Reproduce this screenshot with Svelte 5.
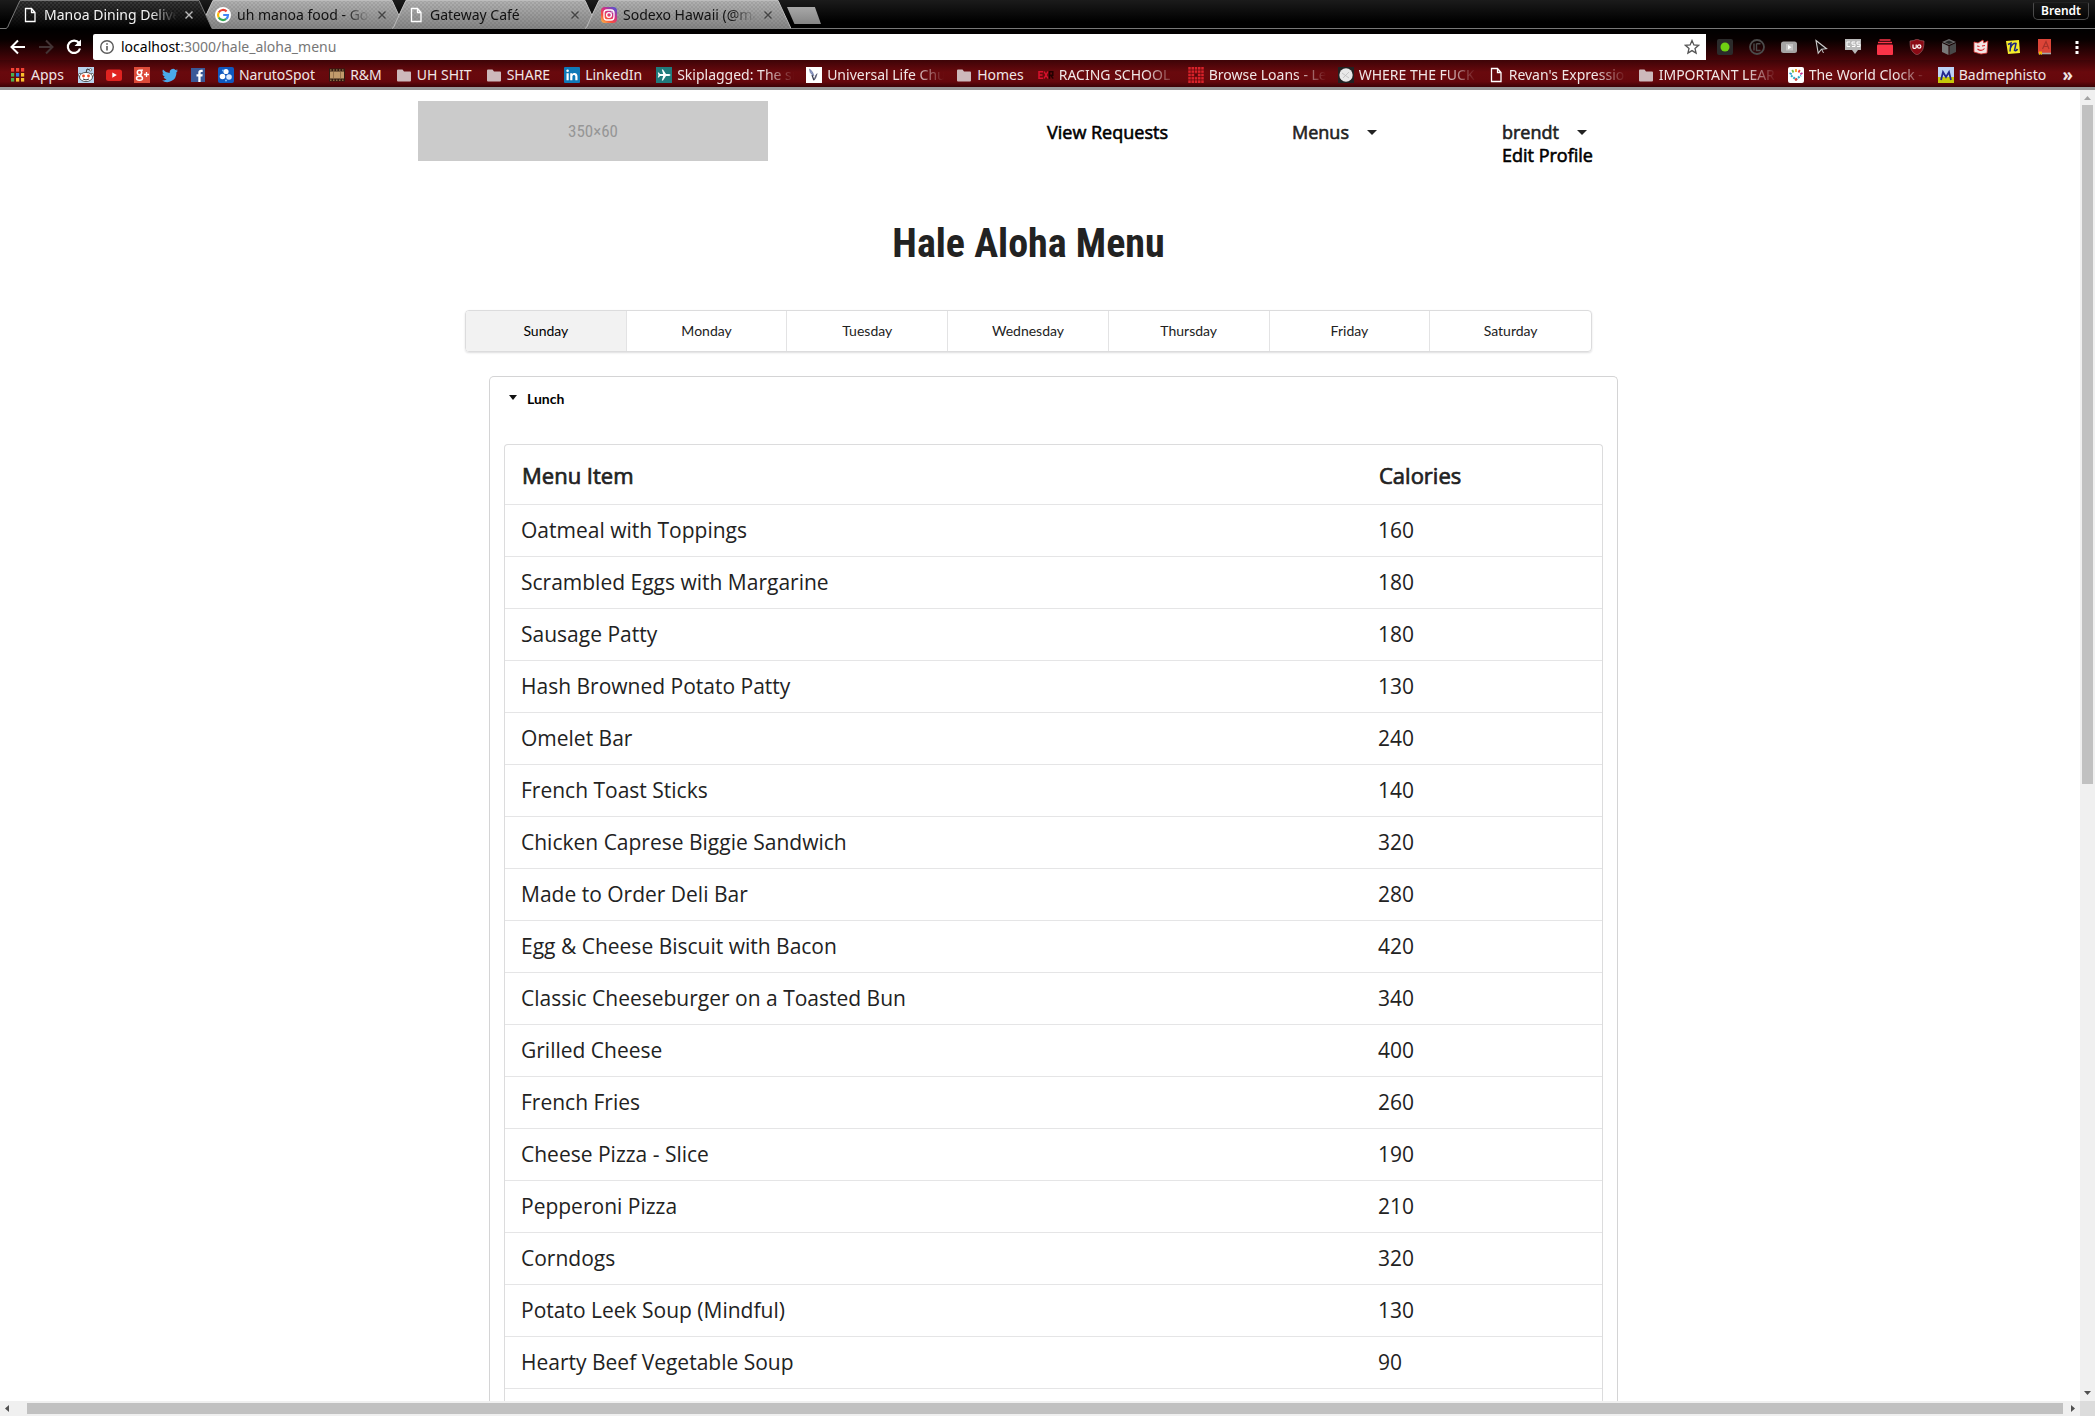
<script lang="ts">
  const tabs = [
    { icon: 'page', label: 'Manoa Dining Delivery', active: true },
    { icon: 'google', label: 'uh manoa food - Google', active: false },
    { icon: 'page', label: 'Gateway Café', active: false },
    { icon: 'instagram', label: 'Sodexo Hawaii (@manoa)', active: false },
  ];

  const bookmarks = [
    { icon: 'apps', label: 'Apps', title: 'Apps' },
    { icon: 'reddit', label: '', title: 'Reddit' },
    { icon: 'youtube', label: '', title: 'YouTube' },
    { icon: 'gplus', label: '', title: 'Google+' },
    { icon: 'twitter', label: '', title: 'Twitter' },
    { icon: 'facebook', label: '', title: 'Facebook' },
    { icon: 'naruto', label: 'NarutoSpot', title: 'NarutoSpot' },
    { icon: 'film', label: 'R&M', title: 'R&M' },
    { icon: 'folder', label: 'UH SHIT', title: 'UH SHIT' },
    { icon: 'folder', label: 'SHARE', title: 'SHARE' },
    { icon: 'linkedin', label: 'LinkedIn', title: 'LinkedIn' },
    { icon: 'plane', label: 'Skiplagged: The smart', title: 'Skiplagged', long: true },
    { icon: 'feather', label: 'Universal Life Church', title: 'Universal Life', long: true },
    { icon: 'folder', label: 'Homes', title: 'Homes' },
    { icon: 'exr', label: 'RACING SCHOOL', title: 'Racing school', long: true },
    { icon: 'loans', label: 'Browse Loans - Lend', title: 'Browse Loans', long: true },
    { icon: 'where', label: 'WHERE THE FUCK', title: 'Where', long: true },
    { icon: 'page', label: "Revan's Expression", title: "Revan's", long: true },
    { icon: 'folder', label: 'IMPORTANT LEARN', title: 'Important', long: true },
    { icon: 'clock', label: 'The World Clock - W', title: 'The World Clock', long: true },
    { icon: 'bad', label: 'Badmephisto', title: 'Badmephisto' },
  ];

  const extensions = ['record', 'pause', 'video', 'cursor', 'css', 'stack', 'shield', 'cube', 'mask', 'note', 'dict'];
  const days = ['Sunday', 'Monday', 'Tuesday', 'Wednesday', 'Thursday', 'Friday', 'Saturday'];

  const items: [string, number][] = [
    ['Oatmeal with Toppings', 160],
    ['Scrambled Eggs with Margarine', 180],
    ['Sausage Patty', 180],
    ['Hash Browned Potato Patty', 130],
    ['Omelet Bar', 240],
    ['French Toast Sticks', 140],
    ['Chicken Caprese Biggie Sandwich', 320],
    ['Made to Order Deli Bar', 280],
    ['Egg & Cheese Biscuit with Bacon', 420],
    ['Classic Cheeseburger on a Toasted Bun', 340],
    ['Grilled Cheese', 400],
    ['French Fries', 260],
    ['Cheese Pizza - Slice', 190],
    ['Pepperoni Pizza', 210],
    ['Corndogs', 320],
    ['Potato Leek Soup (Mindful)', 130],
    ['Hearty Beef Vegetable Soup', 90],
  ];

  let day = $state('Sunday');
</script>

{#snippet icon(name: string)}
  <svg class="icon" viewBox="0 0 16 16" width="16" height="16" aria-hidden="true">
    {#if name === 'page'}
      <path d="M3.500 1.500h6l3.500 4v9h-9.500z M9.500 1.500v4h3.500" fill="none" stroke="#fff" stroke-width="1.300" />
    {:else if name === 'google'}
      <circle cx="8" cy="8" r="8" fill="#fff" />
      <g fill="none" stroke-width="2.200">
        <path d="M11.600 4.400A5 5 0 0 0 3.700 5.500" stroke="#ea4335" />
        <path d="M3.700 5.500a5 5 0 0 0 0 5" stroke="#fbbc05" />
        <path d="M3.700 10.500a5 5 0 0 0 7.500 1.400" stroke="#34a853" />
        <path d="M11.200 11.900A5 5 0 0 0 13 8H8.200" stroke="#4285f4" />
      </g>
    {:else if name === 'instagram'}
      <defs>
        <linearGradient id="insta" x1="0" y1="1" x2="0.800" y2="0">
          <stop offset="0" stop-color="#fec44a" /><stop offset="0.350" stop-color="#f5503f" />
          <stop offset="0.650" stop-color="#d22f86" /><stop offset="1" stop-color="#5a4fcf" />
        </linearGradient>
      </defs>
      <rect width="16" height="16" rx="4" fill="url(#insta)" />
      <rect x="3" y="3" width="10" height="10" rx="3" fill="none" stroke="#fff" stroke-width="1.300" />
      <circle cx="8" cy="8" r="2.400" fill="none" stroke="#fff" stroke-width="1.300" />
      <circle cx="11" cy="5" r=".7" fill="#fff" />
    {:else if name === 'apps'}
      {#each [0, 1, 2] as r}
        {#each [0, 1, 2] as c}
          <rect x={c * 5 + 1} y={r * 5 + 1} width="3.200" height="3.600"
            fill={[['#f44336', '#f44336', '#f44336'], ['#4caf50', '#2f7de1', '#fbc02d'], ['#4caf50', '#fbc02d', '#fbc02d']][r][c]} />
        {/each}
      {/each}
    {:else if name === 'reddit'}
      <rect width="16" height="16" fill="#b9d3ec" />
      <path d="M8 6l1-4 3 .8" stroke="#333" fill="none" />
      <circle cx="12.500" cy="2.800" r="1.200" fill="#fff" stroke="#333" stroke-width=".6" />
      <circle cx="2" cy="8" r="1.700" fill="#fff" stroke="#333" stroke-width=".6" />
      <circle cx="14" cy="8" r="1.700" fill="#fff" stroke="#333" stroke-width=".6" />
      <ellipse cx="8" cy="10" rx="6.500" ry="4.600" fill="#fff" stroke="#333" stroke-width=".8" />
      <circle cx="5.500" cy="9" r="1.400" fill="#f04a24" /><circle cx="10.500" cy="9" r="1.400" fill="#f04a24" />
      <path d="M5 12q3 1.800 6 0" stroke="#333" fill="none" />
    {:else if name === 'youtube'}
      <rect y="2.500" width="16" height="11.500" rx="2.500" fill="#e02320" />
      <path d="M6.300 5.500v5.300l4.500-2.700z" fill="#fff" />
    {:else if name === 'gplus'}
      <rect width="16" height="16" fill="#dd4b39" />
      <circle cx="5.500" cy="5.500" r="2.200" fill="none" stroke="#fff" stroke-width="1.500" />
      <ellipse cx="5.500" cy="11.200" rx="3" ry="2" fill="none" stroke="#fff" stroke-width="1.500" />
      <path d="M6.500 3.200h2.500 M6 7.800l1.500 1.500 M10 7.500h5 M12.500 5v5" stroke="#fff" stroke-width="1.300" fill="none" />
    {:else if name === 'twitter'}
      <path d="M16 3.500c-.6.300-1.200.4-1.900.5.700-.4 1.200-1 1.400-1.800-.6.400-1.300.6-2 .8A3.300 3.300 0 0 0 7.800 6C5 5.900 2.600 4.600 1 2.600c-.9 1.500-.4 3.400 1 4.400-.5 0-1-.2-1.500-.4 0 1.600 1.100 2.900 2.600 3.200-.5.100-1 .2-1.500.1.400 1.300 1.600 2.200 3.100 2.300A6.600 6.600 0 0 1 0 13.500 9.300 9.300 0 0 0 14.400 5.200c.6-.5 1.200-1 1.600-1.700z" fill="#4aa9ea" />
    {:else if name === 'facebook'}
      <rect x="1" y="1" width="14" height="14" fill="#3b5998" />
      <path d="M8.300 15V9.500H6.500V7.300h1.800V5.600c0-1.900 1.200-2.800 2.800-2.800h1.600v2.100h-1.100c-.8 0-1 .4-1 1v1.400h2.100l-.3 2.200h-1.800V15z" fill="#fff" />
    {:else if name === 'naruto'}
      <rect width="16" height="16" rx="2" fill="#1059c0" />
      <circle cx="8" cy="4.500" r="2.600" fill="#fff" /><circle cx="4.500" cy="9.500" r="2.800" fill="#fff" />
      <circle cx="11" cy="10" r="2.800" fill="#dceaff" /><circle cx="5" cy="3.500" r="1" fill="#7fc1ff" /><circle cx="8" cy="13.500" r="1" fill="#7fc1ff" />
    {:else if name === 'film'}
      <rect y="1.500" width="16" height="13" fill="#2f1b12" />
      <rect x="1" y="4.500" width="14" height="7" fill="#c19a6b" />
      <path d="M1 3h14 M1 13.200h14" stroke="#8a6a42" stroke-width="1.400" stroke-dasharray="1.500 1.500" />
      <path d="M4.500 4.500v7M11.500 4.500v7" stroke="#8b6844" stroke-width=".8" />
    {:else if name === 'folder'}
      <path d="M1 3.500q0-1 1-1h4.500l1.500 2h6q1 0 1 1v8q0 1-1 1h-12q-1 0-1-1z" fill="#cdb9bb" />
    {:else if name === 'linkedin'}
      <rect width="16" height="16" rx="1" fill="#0f7ab8" />
      <path d="M2.500 6.200h2.200v7H2.500z M6.200 6.200h2.100v1c1-1.700 5.200-1.800 5.200 2v4h-2.200V9.600c0-2.200-2.900-2-2.900 0v3.600H6.200z" fill="#fff" />
      <circle cx="3.600" cy="3.800" r="1.300" fill="#fff" />
    {:else if name === 'plane'}
      <rect width="16" height="16" fill="#207b7c" />
      <path d="M14.500 8q0-1-2-1H10L7 2.500H5.800L7.200 7H4L2.800 5.500H1.800L2.500 8l-.7 2.500h1L4 9h3.200l-1.400 4.500H7L10 9h2.500q2 0 2-1z" fill="#fff" />
    {:else if name === 'feather'}
      <rect width="16" height="16" fill="#fff" />
      <path d="M3.500 2q3.500 2 4.500 7L6.500 8Q3.500 6 3.500 2z" fill="#8f9cc8" stroke="#5b658f" stroke-width=".5" />
      <path d="M11.500 6Q9 7 7.500 14q3.500-3 4-8z" fill="#5d6076" />
      <path d="M6 8l1.800 5" stroke="#34364a" stroke-width="1.200" />
    {:else if name === 'exr'}
      <g fill="none" stroke-width="1.500">
        <path d="M5 4.800H1v6.400h4M1 8h3.500M6 4.500l4 7M10 4.500l-4 7" stroke="#d8102c" />
        <path d="M11.500 11.700V4.800h3.300v3.400h-3M13 8.500l2.200 3.200" stroke="#200" />
      </g>
    {:else if name === 'loans'}
      <path d="M1.500 0v16M4.750 0v16M8 0v16M11.250 0v16M14.500 0v16" stroke="#d8222a" stroke-width="2.500" />
      <path d="M0 3h16M0 6.300h16M0 9.600h16M0 12.900h16" stroke="#5d070b" stroke-width=".8" />
      <path d="M6.700 6.700h2.800v2.600H6.700z" fill="#5d070b" />
    {:else if name === 'where'}
      <rect width="16" height="16" fill="#222" />
      <circle cx="8" cy="8" r="6.700" fill="#e8e8e8" />
      <path d="M4 6l7 5M11 5l-6 6" stroke="#bbb" stroke-width=".8" />
    {:else if name === 'clock'}
      <rect width="16" height="16" rx="2" fill="#fff" />
      <path d="M8 2v3" stroke="#f8a51b" stroke-width="1.800" /><path d="M4.200 3l1.300 2.500" stroke="#7ac143" stroke-width="1.800" />
      <path d="M11.800 3l-1.300 2.500" stroke="#ef4136" stroke-width="1.800" /><path d="M1.500 6l2.200 1.300" stroke="#2a9fd8" stroke-width="1.800" />
      <path d="M14.500 6l-2.200 1.300" stroke="#c0308f" stroke-width="1.800" />
      <path d="M3 8.500l5 4 5-4" stroke="#2aa9c9" stroke-width="2" stroke-dasharray="2 1" fill="none" />
      <circle cx="8" cy="12.500" r="1.300" fill="#ef4136" />
    {:else if name === 'bad'}
      <rect width="16" height="16" fill="#bcd3f5" /><rect y="10" width="16" height="6" fill="#c5c80a" />
      <path d="M3 13l2-8 3 5 3-5 2 8" stroke="#22278d" stroke-width="1.800" fill="none" />
    {:else if name === 'record'}
      <rect width="16" height="16" rx="2" fill="#2b2b2b" /><circle cx="8" cy="8" r="4.500" fill="#6fcf12" />
    {:else if name === 'pause'}
      <circle cx="8" cy="8" r="7" fill="none" stroke="#4b4b4b" stroke-width="1.800" />
      <path d="M5 4.500v7M7.500 4.800h4M7.500 4.500v7h4" stroke="#4b4b4b" stroke-width="1.400" fill="none" />
    {:else if name === 'video'}
      <rect y="2.500" width="16" height="11.500" rx="2.500" fill="#a6a4a4" /><rect x="5" y="5" width="7" height="6.500" fill="#c4c2c2" /><path d="M7 6v4.500l3.500-2.200z" fill="#fff" />
    {:else if name === 'cursor'}
      <path d="M3 1.500l10.500 8.200-5 .5-3.300 4z" fill="#16090a" stroke="#ccc" stroke-width="1.100" /><path d="M8.500 10l2 4" stroke="#ccc" />
    {:else if name === 'css'}
      <path d="M0 0h16v11h-3l-3 4-3-4H0z" fill="#b9b9b9" />
      <path d="M5 3H2v4.500h3M10 3H7v2.200h3v2.300H7M15 3h-3v2.200h3v2.300h-3" stroke="#fff" fill="none" />
    {:else if name === 'stack'}
      <rect y="5.500" width="16" height="10.500" rx="1" fill="#fb3448" /><path d="M1 3.500h14M2.500 1h11" stroke="#fb3448" stroke-width="1.600" />
    {:else if name === 'shield'}
      <path d="M8 0q3 2 7 2c0 7-1 11-7 14C2 13 1 9 1 2q4 0 7-2z" fill="#8b0a15" stroke="#9d6468" stroke-width=".6" />
      <path d="M4 5.500v3.200q1.800 1.500 3.200 0V5.500" stroke="#fff" stroke-width="1.200" fill="none" /><circle cx="10.200" cy="7.500" r="1.700" stroke="#fff" stroke-width="1.200" fill="none" />
    {:else if name === 'cube'}
      <path d="M8 0l7 3-7 3-7-3z" fill="#666" /><path d="M1 4l6.500 3v9L1 13z" fill="#787878" /><path d="M15 4L8.500 7v9l6.500-3z" fill="#484848" />
      <path d="M4 3.200l4-1.600 4 1.600-4 1.700z" fill="#252525" />
    {:else if name === 'mask'}
      <path d="M1 3l4 1 5-3 .8 3 4-2-.8 12-6 1-7-2z" fill="#f2e4e4" stroke="#d33" stroke-width=".8" />
      <path d="M4 7l2.500.5M9 7l3-.5M4.500 10q4 3 7-.5" stroke="#d8232a" stroke-width="1.100" fill="none" />
    {:else if name === 'note'}
      <path d="M1 2l13-1 1 13-12 1z" fill="#f6ec2c" />
      <path d="M3 5.500L6 4 5 12.500M5.500 9Q8 3.500 11 4.500L9.500 11.500q1.500 1 3-1.500" stroke="#1c2680" stroke-width="1.500" fill="none" />
    {:else if name === 'dict'}
      <rect x="1" width="13" height="14" fill="#db4437" /><path d="M1.500 14.500h12.500" stroke="#a8a8a8" stroke-width="1.600" />
      <path d="M5.500 10L9 2.500l3 7.500M6.800 7.500h4.300" stroke="#a8322a" stroke-width="1.200" fill="none" /><path d="M2 12.500h3V16l-1.500-1L2 16z" fill="#f4b400" />
    {/if}
  </svg>
{/snippet}

<div class="window">
  <header class="chrome">
    <div class="tabstrip">
      <div class="tabs">
        {#each tabs as tab, i}
          <div class="tab" class:active={tab.active}>
            <svg class="shape" viewBox="0 0 206 29" aria-hidden="true">
              <defs>
                <linearGradient id="fill{i}" x1="0" y1="0" x2="0" y2="1">
                  <stop offset="0" stop-color={tab.active ? '#3c3c3c' : '#b2b2b2'} />
                  <stop offset="1" stop-color={tab.active ? '#000' : '#848484'} />
                </linearGradient>
                <pattern id="weave{i}" width="4" height="4" patternUnits="userSpaceOnUse">
                  <path d="M0 0h2v2H0zM2 2h2v2H2z" fill="#000" opacity={tab.active ? '0.300' : '0.070'} />
                </pattern>
              </defs>
              <path d="M0 29L14 0H193L206 29z" fill="url(#fill{i})" />
              <path d="M0 29L14 0H193L206 29z" fill="url(#weave{i})" />
              <path d="M0 28.500Q2 28 3 24L14 .5H193L206 28.500" fill="none" stroke={tab.active ? '#777' : '#bdbdbd'} />
            </svg>
            {@render icon(tab.icon)}
            <button class="tablabel">{tab.label}</button>
            <button class="close" aria-label="Close {tab.label}">
              <svg viewBox="0 0 8 8" width="8" height="8"><path d="M.5.5l7 7M7.500.5l-7 7" stroke="currentColor" stroke-width="1.400" /></svg>
            </button>
          </div>
        {/each}
        <button class="newtab" aria-label="New tab"></button>
      </div>
      <button class="user">Brendt</button>
    </div>

    <div class="toolbar">
      <button aria-label="Back"><svg viewBox="0 0 16 16" width="16" height="16"><path d="M15 8H2M8 1.500L1.500 8 8 14.500" fill="none" stroke="#fff" stroke-width="2" /></svg></button>
      <button aria-label="Forward"><svg viewBox="0 0 16 16" width="16" height="16"><path d="M1 8h13M8 1.500L14.500 8 8 14.500" fill="none" stroke="#423334" stroke-width="2" /></svg></button>
      <button aria-label="Reload"><svg viewBox="0 0 16 16" width="16" height="16"><path d="M13 4A6.200 6.200 0 1 0 14 9.500" fill="none" stroke="#fff" stroke-width="2.200" /><path d="M15 .5v6.500H8.500z" fill="#fff" /></svg></button>
      <div class="omnibox">
        <svg viewBox="0 0 16 16" width="16" height="16" aria-hidden="true"><circle cx="8" cy="8" r="6.300" fill="none" stroke="#5a5a5a" stroke-width="1.400" /><path d="M8 7v4.500M8 4.200v1.600" stroke="#5a5a5a" stroke-width="1.600" /></svg>
        <a class="url" href="#address"><b>localhost</b>:3000/hale_aloha_menu</a>
        <button aria-label="Bookmark this page"><svg viewBox="0 0 16 16" width="16" height="16"><path d="M8 1.500l1.900 4.400 4.700.4-3.600 3.100 1.100 4.700L8 11.600l-4.100 2.500L5 9.400 1.400 6.300l4.700-.4z" fill="none" stroke="#555" stroke-width="1.300" /></svg></button>
      </div>
      <div class="extensions">
        {#each extensions as ext}
          <button aria-label={ext}>{@render icon(ext)}</button>
        {/each}
        <button aria-label="Menu"><svg viewBox="0 0 16 16" width="16" height="16"><path d="M6.500 2h3v3h-3zM6.500 7h3v3h-3zM6.500 12h3v3h-3z" fill="#fff" /></svg></button>
      </div>
    </div>

    <nav class="bookmarks" aria-label="Bookmarks">
      {#each bookmarks as mark}
        <a href="#bookmark" aria-label={mark.title}>
          {@render icon(mark.icon)}
          {#if mark.label}<span class="label" class:long={mark.long}>{mark.label}</span>{/if}
        </a>
      {/each}
      <button class="more" aria-label="More bookmarks">»</button>
    </nav>
  </header>

  <div class="viewport">
    <div class="page">
      <div class="container">
        <nav class="site" aria-label="Site">
          <div><div class="logo">350×60</div></div>
          <div class="entry"><a href="#requests">View Requests</a></div>
          <div class="entry"><button>Menus<i class="caret"></i></button></div>
          <div class="entry"><button>brendt<i class="caret"></i></button><a href="#profile">Edit Profile</a></div>
        </nav>

        <main>
          <div class="week">
            <h1>Hale Aloha Menu</h1>
            <div class="days" role="tablist">
              {#each days as d}
                <button role="tab" aria-selected={d === day} class:selected={d === day} onclick={() => (day = d)}>{d}</button>
              {/each}
            </div>
          </div>
          <section class="meal">
            <button class="mealtitle"><i class="caret"></i>Lunch</button>
            <div class="tablebox">
              <table>
                <thead><tr><th>Menu Item</th><th class="cal">Calories</th></tr></thead>
                <tbody>
                  {#each items as [name, calories]}
                    <tr><td>{name}</td><td>{calories}</td></tr>
                  {/each}
                </tbody>
              </table>
            </div>
          </section>
        </main>
      </div>
    </div>
    <div class="vbar" aria-hidden="true">
      <svg viewBox="0 0 15 15" width="15" height="15"><path d="M4 10l3.500-4 3.500 4z" fill="#a3a3a3" /></svg>
      <div class="rail"><div class="vthumb"></div></div>
      <svg viewBox="0 0 15 15" width="15" height="15"><path d="M4 5l3.500 4L11 5z" fill="#505050" /></svg>
    </div>
    <div class="hbar" aria-hidden="true">
      <svg viewBox="0 0 15 15" width="15" height="15"><path d="M9 4L5 7.500 9 11z" fill="#505050" /></svg>
      <div class="hthumb"></div>
      <svg viewBox="0 0 15 15" width="15" height="15"><path d="M6 4l4 3.500L6 11z" fill="#505050" /></svg>
    </div>
    <div class="corner"></div>
  </div>
</div>

<style>
  :global(body) { margin: 0; background: #fff; }
  .window { height: 100vh; display: flex; flex-direction: column; overflow: hidden; font-family: "Open Sans", sans-serif; color: #222; }
  button { font: inherit; color: inherit; background: none; border: 0; padding: 0; margin: 0; -webkit-text-stroke: inherit; }
  a { color: inherit; text-decoration: none; }
  svg { display: block; flex: none; }

  .chrome { font-family: "Noto Sans", "Open Sans", sans-serif; font-size: 14px; line-height: 20px; color: #f0e6e6; border-bottom: 3px solid #999; background: #000; flex: none; }
  .tabstrip { display: flex; justify-content: space-between; height: 28px; background: linear-gradient(#1b1b1b, #000 22px); border-bottom: 1px solid #777; }
  .tabs { display: flex; padding-left: 6px; }
  .tab { position: relative; isolation: isolate; box-sizing: border-box; width: 206px; height: 29px; margin-right: -13px; padding: 1px 19px 0 16px; display: flex; align-items: center; color: #111; }
  .tab.active { color: #f2f2f2; z-index: 2; }
  .shape { position: absolute; inset: 0; z-index: -1; width: 206px; height: 29px; }
  .tablabel { flex: 1; margin: 0 8px 0 6px; min-width: 0; text-align: left; white-space: nowrap; overflow: hidden; mask-image: linear-gradient(90deg, #000 80%, transparent); }
  .close { color: #444; display: flex; }
  .active .close { color: #bbb; }
  .newtab { width: 34px; height: 17px; margin: 7px 0 0 9px; background: linear-gradient(#a8a8a8, #858585); clip-path: polygon(0 0, 82% 0, 100% 100%, 22% 100%); }
  .user { width: 56px; height: 18px; margin: 2px 6px 0 0; border: 1px solid #4a4a4a; border-top-color: #222; border-radius: 2px 2px 5px 5px; font-size: 12px; font-weight: 600; line-height: 16px; color: #fff; }

  .toolbar { display: flex; align-items: center; height: 26px; padding: 5px 10px 0; gap: 12px; background: linear-gradient(#000, #080000 35%, #470408); }
  .omnibox { flex: 1; display: flex; align-items: center; gap: 6px; height: 26px; padding: 0 6px; margin-left: -1px; background: #fff; border-radius: 2px 0 0 2px; color: #777; }
  .omnibox .url { flex: 1; }
  .omnibox b { font-weight: 400; color: #000; }
  .extensions { display: flex; gap: 16px; margin-left: -1px; }

  .bookmarks { display: flex; align-items: center; height: 25px; padding: 2px 22px 0 10px; gap: 12px; background: linear-gradient(#3d0407, #69090d 45%, #65080c 80%, #3c0306); }
  .bookmarks a { display: flex; align-items: center; gap: 5px; white-space: nowrap; }
  .label { padding-right: 2px; }
  .long { width: 117px; padding-right: 0; overflow: hidden; mask-image: linear-gradient(90deg, #000 74%, transparent); }
  .more { margin-left: auto; font-size: 17px; font-weight: 700; }

  .viewport { flex: 1; min-height: 0; display: grid; grid-template: minmax(0, 1fr) 15px / minmax(0, 1fr) 15px; }
  .page { overflow: hidden; display: flex; justify-content: center; }
  .container { width: 100%; max-width: 1244px; display: flex; flex-direction: column; }
  .site { display: grid; grid-template-columns: 629fr 245fr 210fr 160fr; padding-top: 11px; font-size: 18px; line-height: 23px; -webkit-text-stroke: 0.6px; }
  .logo { width: 350px; height: 60px; background: #cbcbcb; color: #969696; font: 17px/60px "Roboto Condensed", Roboto, sans-serif; text-align: center; -webkit-text-stroke: 0; }
  .entry { padding-top: 20px; display: flex; flex-direction: column; align-items: flex-start; }
  .entry a { color: #000; }
  .entry button { display: flex; align-items: center; gap: 18px; }
  .caret { width: 0; height: 0; border: solid transparent; border-width: 5px 5px 0; border-top-color: #222; }

  main { flex: 1; display: flex; flex-direction: column; }
  .week { padding: 0 70px 0 47px; }
  h1 { margin: 51px 0 40px; text-align: center; font: 700 40px/52px "Roboto Condensed", Roboto, sans-serif; }
  .days { display: grid; grid-template-columns: repeat(7, 1fr); height: 40px; border: 1px solid #dcdcdd; border-radius: 4px; box-shadow: 0 1px 2px #22242626; overflow: hidden; font: 14px/20px Lato, sans-serif; }
  .days button:not(:last-child) { border-right: 1px solid #e3e3e4; }
  .days .selected { background: #f2f2f2; color: #000; }
  .meal { flex: 1; margin: 24px 44px 0 71px; padding: 12px 14px 0; display: flex; flex-direction: column; border: solid #d4d4d5; border-width: 1px 1px 0; border-radius: 5px 5px 0 0; }
  .mealtitle { display: flex; align-items: center; gap: 10px; padding-left: 5px; align-self: flex-start; font: 700 14px/20px Lato, sans-serif; color: #000; }
  .mealtitle .caret { border-width: 5px 4px 0; border-top-color: #111; margin-bottom: 3px; }
  .tablebox { flex: 1; margin-top: 35px; border: solid #dcdcdd; border-width: 1px 1px 0; border-radius: 4px 4px 0 0; }
  table { width: 100%; border-collapse: separate; border-spacing: 0; table-layout: fixed; font-size: 21px; line-height: 29px; }
  th, td { padding: 11px 16px; text-align: left; border-bottom: 1px solid #e5e5e6; }
  th { padding: 15px 17px 14px; font-size: 22px; line-height: 30px; font-weight: 400; -webkit-text-stroke: 0.7px; }
  .cal { width: 240px; box-sizing: border-box; }

  .vbar { display: flex; flex-direction: column; background: #f0f0f0; }
  .rail { flex: 1; }
  .vthumb { height: 53%; margin: 0 2px; background: #c1c1c1; }
  .hbar { display: flex; background: #f0f0f0; }
  .hthumb { flex: 1; margin: 2px 2px 2px 12px; background: #c1c1c1; }
  .corner { background: #dcdcdc; }
</style>
